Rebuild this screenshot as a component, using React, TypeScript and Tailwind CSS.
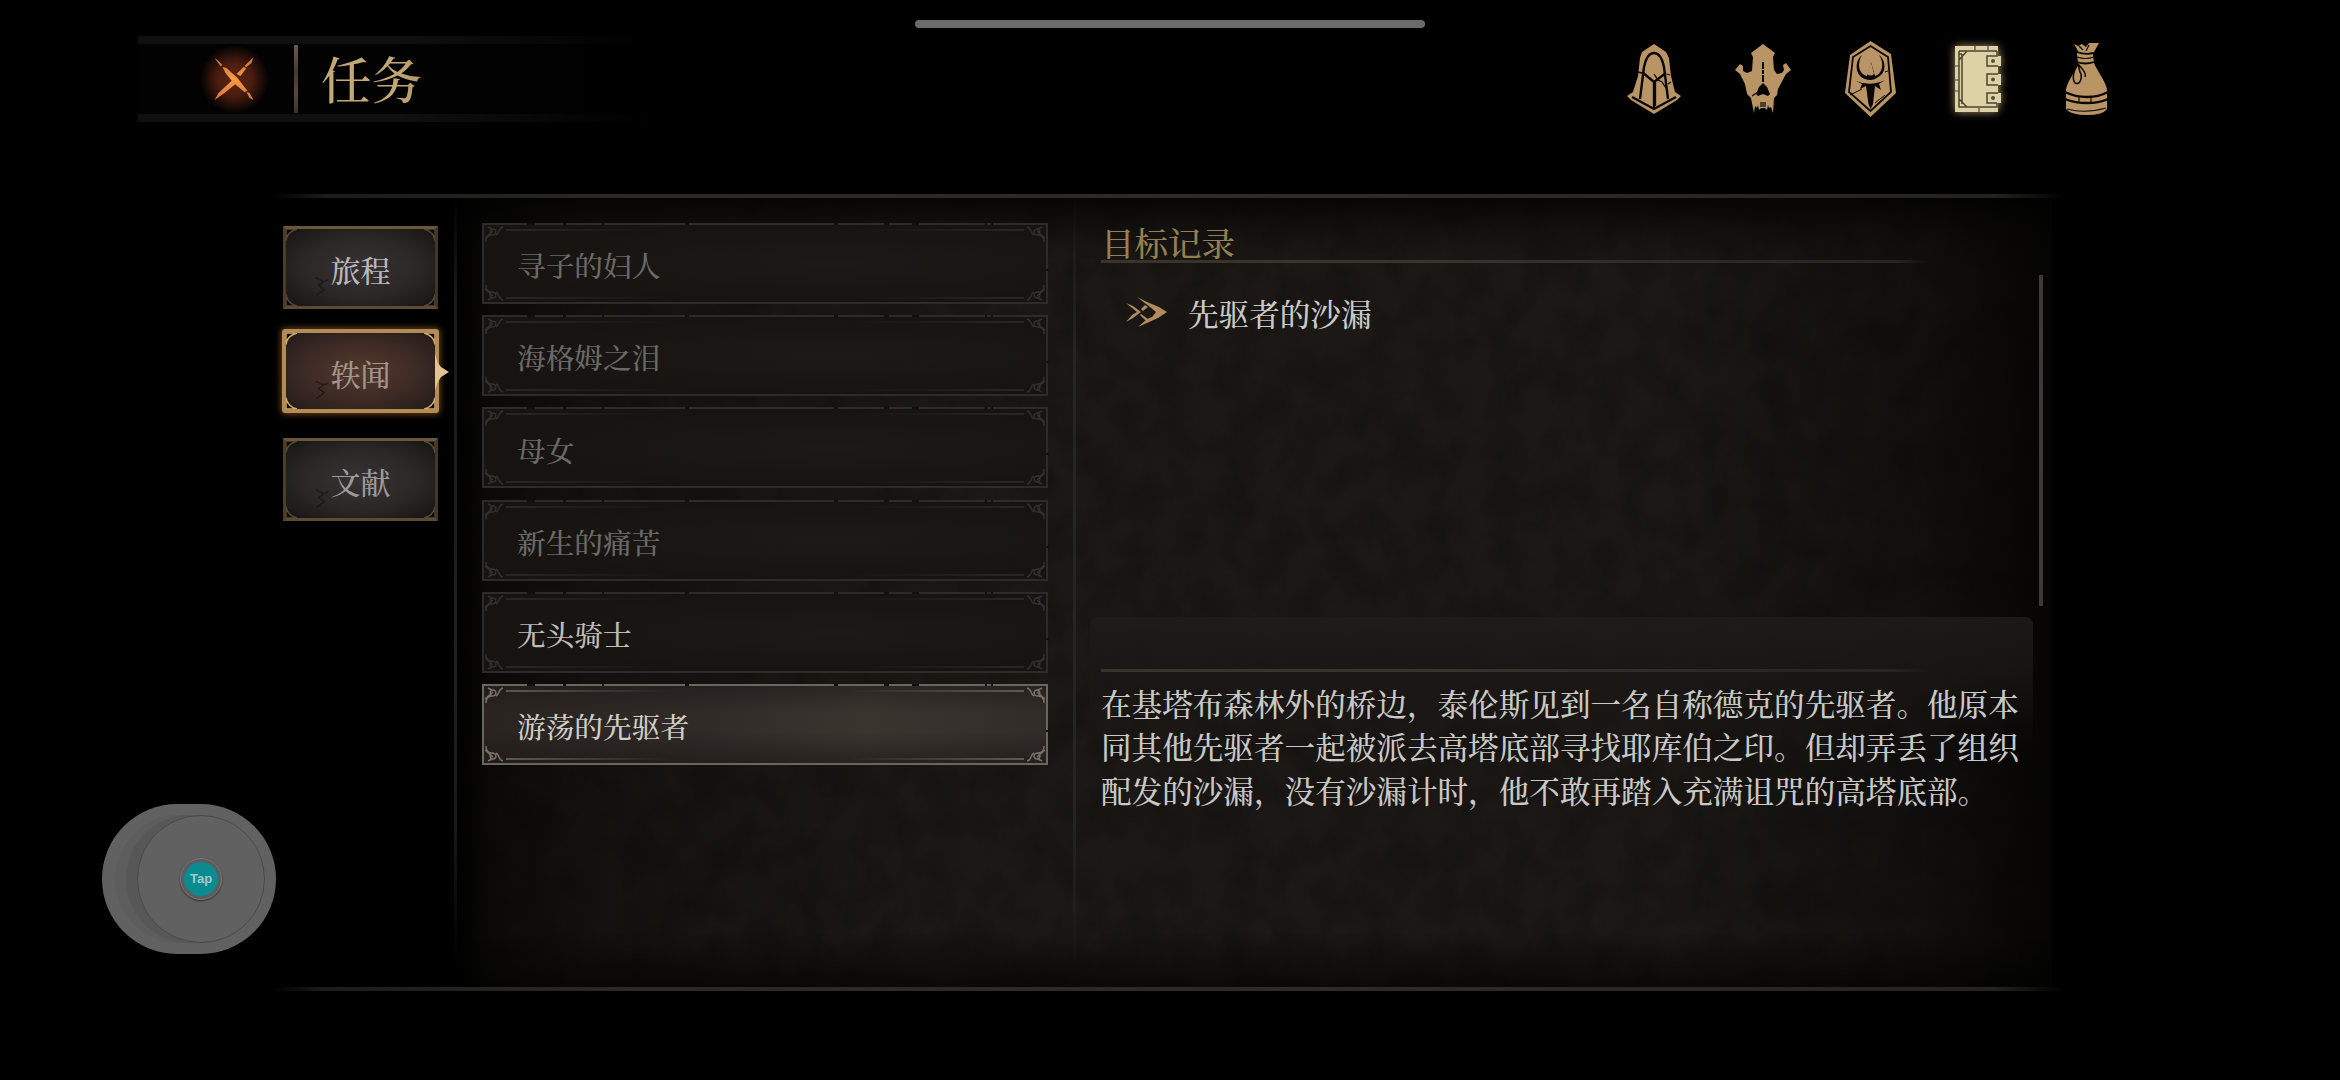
import React from "react";

const quests = [
  { name: "寻子的妇人", tone: "text-[#6b6966]" },
  { name: "海格姆之泪", tone: "text-[#6b6966]" },
  { name: "母女", tone: "text-[#6b6966]" },
  { name: "新生的痛苦", tone: "text-[#6b6966]" },
  { name: "无头骑士", tone: "text-[#bdbcb9]" },
  { name: "游荡的先驱者", tone: "text-[#cfcdc9]", active: true },
];

const story = [
  "在基塔布森林外的桥边，泰伦斯见到一名自称德克的先驱者。他原本",
  "同其他先驱者一起被派去高塔底部寻找耶库伯之印。但却弄丢了组织",
  "配发的沙漏，没有沙漏计时，他不敢再踏入充满诅咒的高塔底部。",
];

function Grain({ id, opacity }: { id: string; opacity: number }) {
  return (
    <svg className="pointer-events-none absolute inset-0 size-full" aria-hidden>
      <filter id={id}>
        <feTurbulence type="fractalNoise" baseFrequency="0.03 0.025" numOctaves="6" seed="8" />
        <feColorMatrix values="0 0 0 0 0  0 0 0 0 0  0 0 0 0 0  2.4 0 0 0 -0.8" />
      </filter>
      <rect width="100%" height="100%" filter={`url(#${id})`} opacity={opacity} />
    </svg>
  );
}

function CloseIcon() {
  return (
    <svg viewBox="0 0 40 44" className="relative h-[44px] w-[41px]">
      <defs>
        <linearGradient id="ember" x1="0" y1="0" x2="0" y2="1">
          <stop offset="0" stopColor="#b9733e" />
          <stop offset=".5" stopColor="#f79a45" />
          <stop offset="1" stopColor="#d07a3a" />
        </linearGradient>
      </defs>
      <g fill="url(#ember)">
        <path d="M0 1 3 3 8 8 6 9zM8 10 12 11 23 21 33 34 30 35 19 26 11 16zM32 35 35 36 39 43 35 41z" />
        <path d="M39 0 37 6 32 10 30 9zM29 10 32 11 26 19 22 17zM18 23 21 27 10 36 0 43 4 36z" />
      </g>
    </svg>
  );
}

const GOLD = "#b99566";

function HelmetIcon() {
  return (
    <svg viewBox="0 0 54 70" className="h-[70px] w-[54px]">
      <path fill={GOLD} d="M27 0 39 8 42 14 44 32 48 48 54 52 50 56 27 70 4 56 0 52 6 48 11 32 13 14 15 8z" />
      <g fill="none" stroke="#0a0705" strokeWidth="2.4">
        <path d="M13 55 17 23Q20 9 27 9T37 23L41 55" />
        <path d="M15 28 27 38 39 29M27 38V64" />
        <path d="M5 53 27 65 49 53" />
      </g>
      <path fill="none" stroke="#0a0705" strokeWidth="1.300" d="m27 30 4 6 4 2 4 6M28.500 38V62M40 30l3 1M44 38l-3 2M11 28l4 1" />
    </svg>
  );
}

function SkullIcon() {
  return (
    <svg viewBox="0 0 56 70" className="h-[70px] w-[56px]">
      <path
        fill={GOLD}
        d="M28 0 40 9 38 13 39 26 42 30 47 29 49 26 48 21 51 19 56 26 51 30 43 45 42 51 39 54 38 69 36 63 34 64 33 61 32 66 30 64 26 64 24 66 23 61 22 64 20 62 19 69 16 54 12 50 10 40 5 30 0 26 5 20 8 22 8 27 12 29 17 27 18 13 16 9z"
      />
      <path fill="#050302" d="m28 39 4 4 3 7-2 2-5-2-5 2-2-2 3-7z" />
      <path stroke="#0a0705" strokeWidth="2" strokeDasharray="7 1 4 1" d="M28 18v20" />
      <path stroke="#0a0705" strokeWidth="1.200" fill="none" d="m17 52 6-4M26 58v5M28 58v5M30 58v5" />
    </svg>
  );
}

function ShieldIcon() {
  return (
    <svg viewBox="0 0 51 76" className="h-[76px] w-[51px]">
      <path fill={GOLD} d="M25.500 0 46 13 51 52 25.500 76 0 52 5 14z" />
      <path fill="none" stroke="#0a0705" strokeWidth="1.800" d="M25.500 5 43 16 46 51 25.500 70 4 51 8 16z" />
      <path fill="#0a0705" d="M17 14C9 20 10 35 20 38 25 40 30 39 33 36 42 32 41 19 34 14 40 23 37 33 30 35L26 21 22 35C13 33 12 22 17 14z" />
      <path fill={GOLD} d="M26 21 29 33Q26 36 22 33z" />
      <path fill="#0a0705" d="M11 40Q25 46 40 39L34 43 36 49 30 45 28 63 25.500 68 23.500 63 21 45 15 48 17 43z" />
      <path stroke="#0a0705" strokeWidth="1" fill="none" d="m5 54 12-6M30 62l10-8M43 30l-3 1" />
    </svg>
  );
}

function JournalIcon() {
  return (
    <svg viewBox="0 0 47 66" className="h-[66px] w-[47px] drop-shadow-[0_0_4px_#a58a68]">
      <path fill="#ddd2a6" d="M0 0H43V10H46V20H43V28H46V39H43V47H46V57H43V66H0z" />
      <g fill="none" stroke="#4d4430" strokeWidth="1.500">
        <path d="M4 5H42M4 5V61H42V57M7 8V58M7 8H4M4 14 12 5M4 53 12 61" />
        <path d="M42 5V10H32V20H43M43 28H32V39H43M43 47H32V57H42" />
        <path strokeWidth="1.200" d="M0 20h4M0 34h4M0 45h4M20 0v4M33 0v4M24 62v4" />
      </g>
      <g fill="#5a4e36">
        <circle cx="38" cy="15" r="2" />
        <circle cx="38" cy="33.500" r="2" />
        <circle cx="38" cy="52" r="2" />
      </g>
    </svg>
  );
}

function PouchIcon() {
  return (
    <svg viewBox="0 0 43 72" className="h-[72px] w-[43px]">
      <path fill={GOLD} d="M9 1 13 3 17 1 21 4 24 0 34 0 29 9 28 11 29 20C31 26 40 37 42 46V66Q38 72 22 72T1 66V46C3 37 11 28 13 20L12 11 13 8z" />
      <g fill="none" stroke="#0a0705" strokeWidth="1.800">
        <path d="M12 9Q20 12 29 10M12 19Q20 22 29 19" />
        <path strokeWidth="1.200" d="M12 14Q20 17 29 14M14 3l4 4M24 2l-3 6" />
        <path strokeWidth="1.500" d="M13 21C8 28 7 36 10 40 15 43 18 34 15 29L13 21Q22 30 20 34" />
        <path strokeWidth="2.400" d="M0 49Q10 54 22 54T43 49M0 56Q10 60 22 60T43 56" />
        <path strokeWidth="1.200" d="M2 66Q20 71 41 65M14 54v5M26 54v5" />
      </g>
    </svg>
  );
}

function Tab({ label, active = false, tone }: { label: string; active?: boolean; tone: string }) {
  return (
    <button
      className={
        active
          ? "relative flex h-[84px] w-[157px] items-center justify-center rounded-[3px] border-[4px] border-[#b38b54] bg-[radial-gradient(ellipse_at_center,#543a2e_0%,#3c2a24_55%,#211a1a_100%)] shadow-[0_0_6px_1px_#6e451b]"
          : "relative flex h-[83px] w-[155px] items-center justify-center border-[3px] border-t-[#6b5838] border-r-[#40372a] border-b-[#5d4b31] border-l-[#4a3e29] bg-[radial-gradient(ellipse_at_center,#373233_0%,#2b2727_55%,#151313_100%)]"
      }
    >
      <TabCorners color={active ? "#d0aa6c" : "#57482f"} />
      <span className={`relative text-[30px] leading-none ${active ? "top-[2px]" : "top-px"} ${tone}`}>{label}</span>
      {active && (
        <svg viewBox="0 0 14 36" className="absolute top-[21px] -right-[14px] h-[36px] w-[14px]">
          <path fill="#e0c590" d="M0 0 3 9 6 13 14 18 6 23 3 28 0 36z" />
        </svg>
      )}
    </button>
  );
}

function TabCorners({ color }: { color: string }) {
  return (
    <svg viewBox="0 0 151 79" preserveAspectRatio="none" className="absolute inset-0 size-full">
      <g fill="#0b0807" stroke={color} strokeWidth="1.500">
        <path d="M0 12Q1 3 11 0H0zM140 0Q150 3 151 12V0zM0 67Q1 76 11 79H0zM140 79Q150 76 151 67V79z" />
      </g>
      <path stroke="#120d0d" strokeOpacity=".6" strokeWidth="1.400" fill="none" d="m30 50 8 4-5 4 6 4-8 6M38 54l5-2" />
    </svg>
  );
}

function Flourish({ className }: { className: string }) {
  return (
    <svg viewBox="0 0 24 18" className={className}>
      <path
        fill="none"
        stroke="currentColor"
        strokeWidth="1.500"
        d="M2 17C2 11 5 10 8 10 13 10 13 4 9 4 6 4 5 8 8 10M4 2 8 4M1 13 9 6M12 10C16 8 14 3 19 2"
      />
    </svg>
  );
}

function QuestRow({ name, tone, active }: { name: string; tone: string; active?: boolean }) {
  return (
    <li
      className={
        active
          ? "relative flex h-[81px] items-center border-2 border-[#6c655e] bg-[linear-gradient(to_bottom,#1d181680,#0000_35%,#0000_60%,#1d1816a0),linear-gradient(to_right,#29241f,#302b27_40%,#3b3530_68%,#312c28)] pl-[33px] text-[#786f66]"
          : "relative flex h-[81px] items-center border-2 border-[#2b2b29] bg-[radial-gradient(ellipse_at_62%_50%,#1c1a18,#161310_70%)] pl-[33px] text-[#30302e]"
      }
    >
      <div className="absolute inset-x-[22px] top-[4px] h-[2px] bg-[linear-gradient(to_right,currentColor,transparent_32%,transparent_66%,currentColor)] opacity-70" />
      <div className="absolute inset-x-[22px] bottom-[3px] h-[2px] bg-[linear-gradient(to_right,currentColor,transparent_32%,transparent_66%,currentColor)] opacity-70" />
      <Flourish className="absolute top-0 left-0 h-[18px] w-[24px]" />
      <Flourish className="absolute top-0 right-0 h-[18px] w-[24px] -scale-x-100" />
      <Flourish className="absolute bottom-0 left-0 h-[18px] w-[24px] -scale-y-100" />
      <Flourish className="absolute right-0 bottom-0 h-[18px] w-[24px] -scale-100" />
      <svg viewBox="0 0 562 77" className="absolute inset-0 size-full overflow-visible">
        <path
          stroke="#12100e"
          strokeWidth="2"
          fill="none"
          d="M43 -1h8M79 -1h3M118 -1h2M201 -1h4M350 -1h4M400 -1h5M428 -1h7M501 -1h2M507 -1h2M562 45h3"
        />
      </svg>
      <span className={`relative top-[2px] text-[28.700px] leading-none ${tone}`}>{name}</span>
    </li>
  );
}

function FrameLine() {
  return (
    <div className="h-[4px] w-[1796px] bg-[linear-gradient(to_right,transparent,#1d1c1a_3%,#2a2925_20%,#2c2b27_60%,#24231f_96%,transparent)]" />
  );
}

export default function App() {
  return (
    <div className="relative flex h-[1080px] w-[2340px] flex-col overflow-hidden bg-black font-['Noto_Serif_CJK_SC','Noto_Sans_CJK_SC',serif] font-medium">
      <div className="absolute top-[20px] left-[915px] h-[8px] w-[510px] rounded-full bg-[#6b6b6b]" />

      <header className="flex h-[194px] items-start justify-between pr-[232px] pl-[138px]">
        <div className="mt-[36px] flex h-[86px] w-[516px] items-center border-y-[8px] border-[#101010] bg-[#020202] mask-r-from-50% mask-r-to-100%">
          <button className="relative ml-[76px] flex h-[44px] w-[41px] shrink-0 items-center">
            <div className="absolute -inset-x-[14px] -inset-y-[12px] bg-[radial-gradient(closest-side,#5e2514,#4a1c10_50%,transparent)]" />
            <CloseIcon />
          </button>
          <div className="ml-[39px] h-[68px] w-[4px] shrink-0 bg-[linear-gradient(to_bottom,#6b5c48,#44392c_40%,#55483a_70%,#3c3328)]" />
          <h1 className="relative -top-[2px] ml-[23px] text-[50.500px] leading-none text-[#c2a874]">任务</h1>
        </div>
        <nav className="mt-[40px] flex h-[77px] items-center">
          <HelmetIcon />
          <div className="ml-[54px] flex"><SkullIcon /></div>
          <div className="ml-[54px] flex"><ShieldIcon /></div>
          <div className="ml-[59px] flex"><JournalIcon /></div>
          <div className="ml-[63px] flex"><PouchIcon /></div>
        </nav>
      </header>

      <main className="ml-[271px] flex w-[1796px] flex-col self-start">
        <FrameLine />
        <div className="flex h-[789px]">
          <aside className="flex w-[183px] flex-col pt-[28px] pl-[12px]">
            <Tab label="旅程" tone="text-[#b9b7b8]" />
            <div className="mt-[20px] -ml-px"><Tab label="轶闻" active tone="text-[#a3958c]" /></div>
            <div className="mt-[25px]"><Tab label="文献" tone="text-[#9d9a9b]" /></div>
          </aside>
          <div className="h-full w-[3px] bg-[linear-gradient(to_bottom,transparent,#1a1a1a_12%,#202020_60%,#181818_80%,transparent_97%)]" />

          <div className="relative flex w-[1595px] bg-[#1b1815]">
            <Grain id="grain" opacity={0.17} />
            <div className="absolute inset-0 bg-[linear-gradient(to_right,#000,#0009_2%,#0004_8%,transparent_30%,transparent_75%,#0005_92%,#000c)]" />
            <div className="absolute inset-0 bg-[linear-gradient(to_bottom,#000b,#0004_4%,transparent_8%,transparent_93%,#0009)]" />

            <ul className="relative ml-[25px] flex w-[566px] flex-col gap-[11.200px] pt-[25px]">
              {quests.map((q) => (
                <QuestRow key={q.name} {...q} />
              ))}
            </ul>
            <div className="relative ml-[25px] h-[770px] w-[3px] bg-[linear-gradient(to_bottom,transparent,#262423_20%,#262423_80%,transparent)]" />

            <div className="relative flex w-[976px] flex-col">
              <section className="flex h-[419px] justify-between">
                <div className="flex flex-col pt-[28px] pl-[25px]">
                  <h2 className="h-[34px] text-[33.500px] leading-[31px] text-[#957f50]">目标记录</h2>
                  <div className="h-[3px] w-[828px] bg-[linear-gradient(to_right,#37342c,#37342c_40%,#2b2926_75%,#262421_96%,transparent)]" />
                  <div className="mt-[28px] ml-[24px] flex items-center">
                    <svg viewBox="0 0 42 30" className="relative -top-px h-[30px] w-[42px]">
                      <path
                        fill="#b18a5e"
                        d="M12 0 22 5 34 10 42 15 33 21 13 30 22 22 27 20 31 15 25 10zM1 6 8 9 16 15 8 21 1 25 7 18 12 15zM16 12 20 8 23 10 18 14zM16 17 23 22 20 23 15 18z"
                      />
                    </svg>
                    <span className="ml-[21px] text-[30.600px] leading-[44px] text-[#c9c9c9]">先驱者的沙漏</span>
                  </div>
                </div>
                <div className="mt-[77px] mr-[9px] h-[331px] w-[4px] bg-[#3b3a36]" />
              </section>
              <section className="ml-[14px] h-[363px] w-[943px] rounded-[8px] bg-[linear-gradient(to_bottom,#201c1bcc,#1b1716cc_14%,#0000_36%)] pt-[52px] pl-[11px]">
                <div className="h-[3px] w-[828px] bg-[linear-gradient(to_right,#37342c,#37342c_40%,#2b2926_75%,#262421_96%,transparent)]" />
                <p className="mt-[10px] text-[30.600px] leading-[43.300px] whitespace-nowrap text-[#c8c8c6]">
                  {story.map((line) => (
                    <span key={line} className="block">{line}</span>
                  ))}
                </p>
              </section>
            </div>
          </div>
        </div>
        <FrameLine />
      </main>

      <div className="absolute top-[804px] left-[102px] h-[150px] w-[174px] overflow-hidden rounded-[75px] bg-[#616161]">
        <div className="absolute top-[11px] left-[13px] size-[128px] rounded-full bg-[#5d5d5d]" />
        <div className="absolute top-[11px] left-[24px] size-[128px] rounded-full bg-[#575757]" />
        <div className="absolute top-[11px] left-[35px] flex size-[128px] items-center justify-center rounded-full border border-[#4a4a4a] bg-[#616161]">
          <div className="flex size-[42px] items-center justify-center rounded-full border border-[#777] bg-[#5c5c5c] shadow-[0_1px_2px_#333]">
            <div className="flex size-[34px] items-center justify-center rounded-full bg-[#0a8a91] font-['Liberation_Sans',sans-serif] text-[13px] font-bold text-[#a9c9ca]">
              Tap
            </div>
          </div>
        </div>
      </div>
    </div>
  );
}
